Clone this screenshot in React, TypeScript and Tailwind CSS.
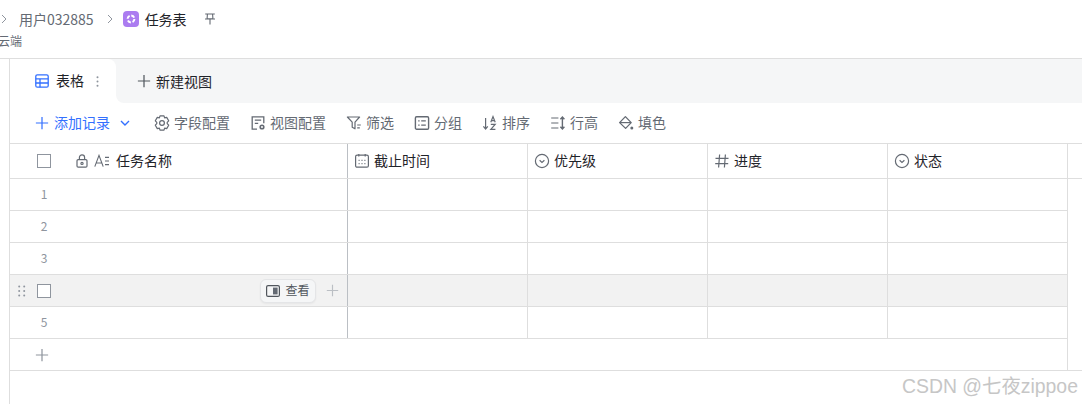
import React from "react";

const S = ({ className = "", size = 16, children }: { className?: string; size?: number; children: React.ReactNode }) => (
  <svg width={size} height={size} viewBox="0 0 16 16" fill="none" stroke="currentColor" strokeWidth="1.2" className={"shrink-0 " + className}>
    {children}
  </svg>
);

const Chevron = () => (
  <svg width="6" height="10" viewBox="0 0 6 10" fill="none" stroke="#8f959e" strokeWidth="1" className="shrink-0">
    <path d="M1 1l4 4-4 4" />
  </svg>
);

const Plus = ({ size = 16, className = "" }: { size?: number; className?: string }) => (
  <svg width={size} height={size} viewBox="0 0 16 16" fill="none" stroke="currentColor" strokeWidth="1.4" className={"shrink-0 " + className}>
    <path d="M8 1v14M1 8h14" />
  </svg>
);

const Check = () => <div className="w-[14px] h-[14px] border border-[#8f959e] bg-white shrink-0" />;

const Round = () => (
  <S>
    <circle cx="8" cy="8" r="6.6" />
    <path d="M5.6 7.2L8 9.4l2.4-2.2" />
  </S>
);

const Calendar = () => (
  <S>
    <rect x="1.6" y="2.2" width="12.8" height="12" rx="1.5" />
    <path d="M4.8 1v2.4M11.2 1v2.4" />
    <path d="M4.6 7.4h1M7.5 7.4h1M10.4 7.4h1M4.6 10.6h1M7.5 10.6h1M10.4 10.6h1" strokeWidth="1.3" />
  </S>
);

const Hash = () => (
  <S>
    <path d="M5.6 1.5L4.6 14.5M11.4 1.5l-1 13M1.5 5.4h13M1.2 10.6h13" />
  </S>
);

const tools: { label: string; icon: React.ReactNode }[] = [
  {
    label: "字段配置",
    icon: (
      <S>
        <path
          d="M6 .9h4l.6 2 2.1-.5 2 3.4-1.5 1.6v1.2l1.5 1.6-2 3.4-2.1-.5-.6 2H6l-.6-2-2.1.5-2-3.4 1.5-1.6V7.4L1.3 5.8l2-3.4 2.1.5z"
          strokeLinejoin="round"
        />
        <circle cx="8" cy="8" r="2.4" />
      </S>
    ),
  },
  {
    label: "视图配置",
    icon: (
      <S>
        <path d="M7 14.2H2.2V1.8h11.6v6.4" strokeWidth="1.3" />
        <path d="M4.8 5.2h6.4M4.8 8.4h3.4" strokeWidth="1.3" />
        <circle cx="12" cy="12" r="1.8" strokeWidth="1.6" />
      </S>
    ),
  },
  {
    label: "筛选",
    icon: (
      <S>
        <path d="M1.4 2h12.2L9 7.2v6.6l-2.8-1.6v-5z" strokeLinejoin="round" />
        <path d="M11.2 10h3.6M11.2 12.8h2.6" />
      </S>
    ),
  },
  {
    label: "分组",
    icon: (
      <S>
        <rect x="1.4" y="1.8" width="13.2" height="12.4" rx="1.2" strokeWidth="1.4" />
        <path d="M4.2 5.8h1.4M7.2 5.8h4.6M4.2 10.2h1.4M7.2 10.2h4.6" />
      </S>
    ),
  },
  {
    label: "排序",
    icon: (
      <S>
        <path d="M3.6 3v11M1.4 11.4l2.2 2.6 2.2-2.6" />
        <path d="M8.8 7.2l2.2-5.6 2.2 5.6M9.5 5.6h3M8.8 9.4h4.4l-4.4 5h4.6" />
      </S>
    ),
  },
  {
    label: "行高",
    icon: (
      <S>
        <path d="M1.2 3h7.2M1.2 8h7.2M1.2 13h7.2" />
        <path d="M12.4 2v12M10.4 4.2l2-2.2 2 2.2M10.4 11.8l2 2.2 2-2.2" strokeWidth="1.4" />
      </S>
    ),
  },
  {
    label: "填色",
    icon: (
      <S>
        <path d="M7.4 1.6l5.8 6-5.6 5.8-6-5.8z" strokeLinejoin="round" strokeWidth="1.3" />
        <path d="M2 7.6h11" />
        <circle cx="13.8" cy="13" r="1.5" fill="currentColor" stroke="none" />
      </S>
    ),
  },
];

const cols = [
  { label: "截止时间", icon: <Calendar /> },
  { label: "优先级", icon: <Round /> },
  { label: "进度", icon: <Hash /> },
  { label: "状态", icon: <Round /> },
];

const Cells = () => (
  <>
    {cols.map((c) => (
      <div key={c.label} className="w-[180px] shrink-0 border-r border-[#dedede]" />
    ))}
  </>
);

const Row = ({ n, hover = false }: { n: number; hover?: boolean }) => (
  <div className={"flex h-[32px] w-[1058px] border-b border-[#dedede] " + (hover ? "bg-[#f2f2f2]" : "")}>
    <div className="w-[338px] shrink-0 border-r border-[#bbbfc4] flex items-center">
      {hover ? (
        <>
          <svg width="8" height="12" viewBox="0 0 8 12" fill="#8f959e" className="ml-[8px] shrink-0">
            <circle cx="1.2" cy="1.5" r="1" />
            <circle cx="6.2" cy="1.5" r="1" />
            <circle cx="1.2" cy="6" r="1" />
            <circle cx="6.2" cy="6" r="1" />
            <circle cx="1.2" cy="10.5" r="1" />
            <circle cx="6.2" cy="10.5" r="1" />
          </svg>
          <div className="ml-[11px]">
            <Check />
          </div>
          <div className="ml-auto h-[24px] w-[56px] rounded-[6px] border border-[#e4e5e7] bg-[#f5f6f7] flex items-center justify-center gap-[5px] text-[12px] text-[#51565d] shadow-[0_1px_2px_rgba(0,0,0,0.05)]">
            <svg width="14" height="12" viewBox="0 0 14 12" fill="none" className="shrink-0">
              <rect x="0.6" y="0.6" width="12.8" height="10.8" rx="1.5" stroke="#51565d" strokeWidth="1.2" />
              <rect x="7" y="2.6" width="4.6" height="6.8" fill="#646a73" />
            </svg>
            <span className="pb-[2px]">查看</span>
          </div>
          <Plus size={13} className="ml-[10px] mr-[8px] text-[#bbbfc4]" />
        </>
      ) : (
        <span className="w-[68px] pb-[2px] text-center text-[12px] leading-none text-[#8f959e]">{n}</span>
      )}
    </div>
    <Cells />
  </div>
);

export default function App() {
  return (
    <div
      className="relative w-[1082px] h-[404px] overflow-hidden bg-white text-[#1f2329] text-[14px]"
      style={{ fontFamily: '"Noto Sans CJK SC", "Noto Sans", sans-serif' }}
    >
      <header className="h-[59px] pt-[9px] border-b border-[#dedede] bg-white">
        <div className="flex items-center h-[20px] pl-[1px]">
          <Chevron />
          <span className="ml-[12px] text-[#646a73]">用户032885</span>
          <div className="ml-[13px]">
            <Chevron />
          </div>
          <svg width="16" height="16" viewBox="0 0 16 16" className="ml-[10px] shrink-0">
            <rect width="16" height="16" rx="4" fill="#ab7cf0" />
            <circle cx="8" cy="8" r="3.4" fill="none" stroke="#fff" strokeWidth="2" strokeDasharray="3.6 1.7" />
          </svg>
          <span className="ml-[6px]">任务表</span>
          <svg width="12" height="12" viewBox="0 0 12 12" fill="none" stroke="#646a73" strokeWidth="1.1" className="ml-[17px] shrink-0">
            <path d="M1.2 1h9.6M3.4 1.2l-.3 4.6h5.8l-.3-4.6M1 6h10M6 6v5.6" />
          </svg>
        </div>
        <div className="mt-[2px] -ml-[2px] text-[12px] leading-[20px] text-[#646a73]">云端</div>
      </header>

      <div className="ml-[9px] border-l border-[#dedede]">
        <div className="flex h-[44px]">
          <div className="w-[106px] shrink-0 bg-[#f5f6f7]">
            <div className="h-full bg-white rounded-tr-[8px] flex items-center pl-[25px]">
              <svg width="14" height="14" viewBox="0 0 14 14" fill="none" stroke="#3370ff" strokeWidth="1.3" className="shrink-0">
                <rect x="0.8" y="0.8" width="12.4" height="12.4" rx="1.5" />
                <path d="M0.8 4.9h12.4M0.8 9h12.4M5 4.9v8.3" />
              </svg>
              <span className="ml-[7px] pb-[2px]">表格</span>
              <svg width="3" height="11" viewBox="0 0 3 11" fill="#8f959e" className="ml-[12px] shrink-0">
                <circle cx="1.5" cy="1.2" r="1" />
                <circle cx="1.5" cy="5.5" r="1" />
                <circle cx="1.5" cy="9.8" r="1" />
              </svg>
            </div>
          </div>
          <div className="flex-1 bg-[#f5f6f7] rounded-bl-[8px] flex items-center pl-[21px] gap-[5px]">
            <Plus size={14} className="text-[#51565d]" />
            <span>新建视图</span>
          </div>
        </div>

        <div className="flex items-center h-[41px] pl-[25px] border-b border-[#dedede] text-[#646a73]">
          <Plus size={14} className="text-[#3370ff]" />
          <span className="ml-[5px] pb-[2px] text-[#3370ff]">添加记录</span>
          <svg width="10" height="6" viewBox="0 0 10 6" fill="none" stroke="#3370ff" strokeWidth="1.4" className="ml-[10px] mr-[24px] shrink-0">
            <path d="M1 1l4 4 4-4" />
          </svg>
          <div className="flex items-center gap-[20px]">
            {tools.map((t) => (
              <div key={t.label} className="flex items-center gap-[4px]">
                <span className="text-[#646a73] flex">{t.icon}</span>
                <span className="pb-[2px]">{t.label}</span>
              </div>
            ))}
          </div>
        </div>

        <div className="flex h-[35px] border-b border-[#dedede]">
          <div className="w-[338px] shrink-0 border-r border-[#bbbfc4] flex items-center pl-[27px]">
            <Check />
            <svg width="14" height="14" viewBox="0 0 14 14" fill="none" stroke="#646a73" strokeWidth="1.2" className="ml-[24px] shrink-0">
              <rect x="2" y="5.6" width="10" height="7.6" rx="1.2" />
              <path d="M4.4 5.6V3.4a2.6 2.6 0 015.2 0v2.2" />
              <circle cx="7" cy="9.4" r="1.1" />
            </svg>
            <svg width="16" height="14" viewBox="0 0 16 14" fill="none" stroke="#646a73" strokeWidth="1.1" className="ml-[5px] shrink-0">
              <path d="M0.8 12.6L5 1.4l4.2 11.2M2.2 9h5.6M11 3.4h4M11 7h4M11 10.6h4" />
            </svg>
            <span className="ml-[6px] pb-[2px]">任务名称</span>
          </div>
          {cols.map((c) => (
            <div key={c.label} className="w-[180px] shrink-0 border-r border-[#dedede] flex items-center pl-[6px] gap-[4px]">
              <span className="text-[#646a73] flex">{c.icon}</span>
              <span className="pb-[2px]">{c.label}</span>
            </div>
          ))}
        </div>

        <Row n={1} />
        <Row n={2} />
        <Row n={3} />
        <Row n={4} hover />
        <Row n={5} />

        <div className="h-[32px] border-b border-[#dedede]">
          <div className="flex items-center h-full w-[1058px] border-r border-[#dedede] pl-[25px]">
            <Plus size={14} className="text-[#8f959e]" />
          </div>
        </div>
        <div className="h-[40px]" />
      </div>

      <div
        className="absolute left-[902px] top-[375px] text-[19.4px] leading-[22px] text-[#c6c6c6] whitespace-nowrap"
        style={{ fontFamily: '"Liberation Sans", "Noto Sans CJK SC", sans-serif' }}
      >
        CSDN @七夜zippoe
      </div>
    </div>
  );
}
